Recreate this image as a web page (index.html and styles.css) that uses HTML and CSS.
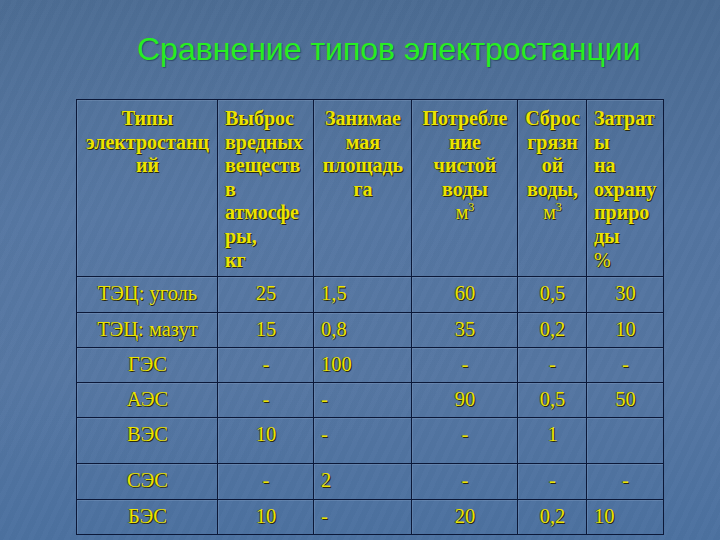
FILE: index.html
```html
<!DOCTYPE html>
<html lang="ru">
<head>
<meta charset="utf-8">
<title>Сравнение типов электростанции</title>
<link rel="stylesheet" href="styles.css">
</head>
<body>
<div class="slide">
  <h1 class="title">Сравнение типов электростанции</h1>
  <table class="grid">
    <colgroup>
      <col class="c1"><col class="c2"><col class="c3"><col class="c4"><col class="c5"><col class="c6">
    </colgroup>
    <tr class="head">
      <th class="ctr">Типы<br>электростанц<br>ий</th>
      <th class="lft">Выброс<br>вредных<br>веществ<br>в<br>атмосфе<br>ры,<br>кг</th>
      <th class="ctr">Занимае<br>мая<br>площадь<br>га</th>
      <th class="ctr">Потребле<br>ние<br>чистой<br>воды<br><span class="unit">м<sup>3</sup></span></th>
      <th class="ctr">Сброс<br>грязн<br>ой<br>воды,<br><span class="unit">м<sup>3</sup></span></th>
      <th class="lft">Затрат<br>ы<br>на<br>охрану<br>приро<br>ды<br><span class="unit">%</span></th>
    </tr>
    <tr class="r36"><td class="ctr">ТЭЦ: уголь</td><td class="ctr">25</td><td class="lft">1,5</td><td class="ctr">60</td><td class="ctr">0,5</td><td class="ctr">30</td></tr>
    <tr class="r35"><td class="ctr">ТЭЦ: мазут</td><td class="ctr">15</td><td class="lft">0,8</td><td class="ctr">35</td><td class="ctr">0,2</td><td class="ctr">10</td></tr>
    <tr class="r35"><td class="ctr">ГЭС</td><td class="ctr">-</td><td class="lft">100</td><td class="ctr">-</td><td class="ctr">-</td><td class="ctr">-</td></tr>
    <tr class="r35"><td class="ctr">АЭС</td><td class="ctr">-</td><td class="lft">-</td><td class="ctr">90</td><td class="ctr">0,5</td><td class="ctr">50</td></tr>
    <tr class="r46"><td class="ctr">ВЭС</td><td class="ctr">10</td><td class="lft">-</td><td class="ctr">-</td><td class="ctr">1</td><td class="ctr"></td></tr>
    <tr class="r36"><td class="ctr">СЭС</td><td class="ctr">-</td><td class="lft">2</td><td class="ctr">-</td><td class="ctr">-</td><td class="ctr">-</td></tr>
    <tr class="r35"><td class="ctr">БЭС</td><td class="ctr">10</td><td class="lft">-</td><td class="ctr">20</td><td class="ctr">0,2</td><td class="lft">10</td></tr>
  </table>
</div>
</body>
</html>
```
FILE: styles.css
```css
html, body {
  margin: 0;
  padding: 0;
}
body {
  width: 720px;
  height: 540px;
  overflow: hidden;
}
.slide {
  width: 720px;
  height: 540px;
  box-sizing: border-box;
  background:
    repeating-linear-gradient(115deg, rgba(255,255,255,0.012) 0 5px, rgba(0,0,0,0.01) 5px 11px),
    radial-gradient(ellipse at 20% 30%, rgba(120,150,190,0.12), transparent 60%),
    linear-gradient(180deg, #4a6a91 0%, #5374a0 40%, #5576a2 70%, #4c71a0 100%);
  display: flex;
  flex-direction: column;
}
.title {
  margin: 0;
  height: 99px;
  box-sizing: border-box;
  padding: 29px 0 0 137px;
  font-family: "Liberation Sans", Arial, sans-serif;
  font-weight: normal;
  font-size: 32px;
  line-height: 40px;
  color: #26ee22;
  text-shadow: 1px 1px 1px rgba(20,40,60,0.5);
  white-space: nowrap;
}
.grid {
  margin-left: 76px;
  border-collapse: collapse;
  table-layout: fixed;
  width: 588px;
  font-family: "Liberation Serif", "Times New Roman", serif;
  color: #ece400;
  text-shadow: 1px 1px 0 #2a2a10, -1px 0 0 rgba(40,40,20,0.5);
}
.c1 { width: 141px; }
.c2 { width: 96px; }
.c3 { width: 98px; }
.c4 { width: 106px; }
.c5 { width: 69px; }
.c6 { width: 77px; }
.grid th, .grid td {
  border: 1px solid #0b1838;
  box-shadow: inset 1px 1px 0 rgba(180,200,230,0.18);
  vertical-align: top;
  padding: 7px 6px 0 7px;
  overflow: hidden;
  white-space: nowrap;
}
.grid th {
  font-weight: bold;
  font-size: 20px;
  line-height: 23.6px;
  height: 169px;
}
.grid td {
  font-size: 20.5px;
  line-height: 24px;
  padding-top: 4px;
}
.r36 td { height: 31px; }
.r35 td { height: 30px; }
.r46 td { height: 41px; }
.ctr { text-align: center; }
.lft { text-align: left; }
.unit {
  font-weight: normal;
}
.unit sup {
  font-size: 60%;
  line-height: 0;
}
```
